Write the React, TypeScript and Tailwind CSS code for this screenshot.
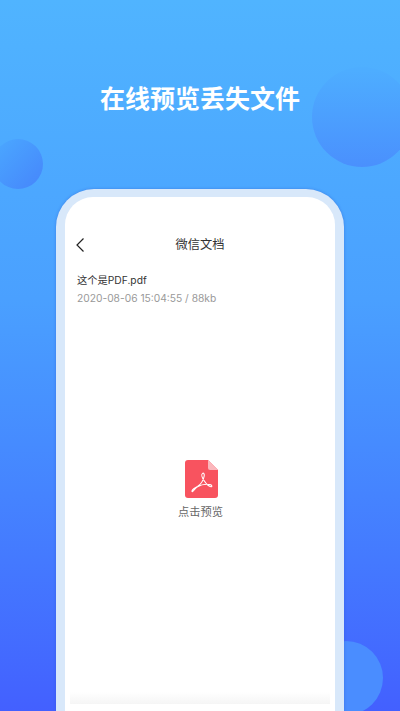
const cjk = "font-['Inter','Noto_Sans_CJK_SC',sans-serif]";

function PdfIcon() {
  return (
    <svg className="ml-[2px]" width="33" height="38" viewBox="0 0 33 38" fill="none">
      <path d="M3 0H23L33 10V35a3 3 0 0 1-3 3H3a3 3 0 0 1-3-3V3a3 3 0 0 1 3-3Z" fill="#f8535f" />
      <path d="M23 0L33 10H25a2 2 0 0 1-2-2Z" fill="#fbb6bb" />
      <path
        d="M7 31.5C6.5 29.5 10 28 12.5 26.5C15.5 24.5 18.5 20 19.2 16C19.6 13.5 18.5 12.8 17.5 13.4C16 14.5 17.2 18 19 20.5C21 23.5 24 26.5 26 26.8C27.5 26.8 27 25 25 24.6C21.5 24 16 24.8 12.5 26.8C10 28.3 7.5 32.5 7 31.5Z"
        stroke="#fff"
        strokeWidth="1.1"
        strokeLinejoin="round"
      />
    </svg>
  );
}

export default function App() {
  return (
    <div className={`relative flex h-[711px] w-[400px] flex-col items-center overflow-hidden bg-gradient-to-b from-[#50b4ff] via-[#4aa0ff] via-42% to-[#4360ff] ${cjk}`}>
      <div className="absolute left-[312px] top-[67px] h-[100px] w-[100px] rounded-full bg-gradient-to-b from-[#4eaeff] to-[#4a90fd]" />
      <div className="absolute left-[-7px] top-[139px] h-[50px] w-[50px] rounded-full bg-gradient-to-br from-[#4ba9ff] to-[#4685fb]" />
      <div className="absolute left-[309px] top-[641px] h-[74px] w-[74px] rounded-full bg-[#4a8dff]" />

      <h1 className="relative mt-[81px] text-[25px] leading-[36px] font-bold text-white">在线预览丢失文件</h1>

      <div className="relative mt-[72px] w-[288px] flex-1 rounded-t-[38px] bg-[#d8e8fa] px-[9px] pt-[8px] shadow-[0_0_3px_rgba(40,80,200,0.45)]">
        <div className="flex h-full flex-col rounded-t-[28px] bg-white">
          <div className="relative mt-[38px] flex h-[20px] items-center justify-center">
            <svg className="absolute left-[10px] top-[2px]" width="10" height="16" viewBox="0 0 10 16" fill="none">
              <path d="M8.5 1.5L2 8L8.5 14.5" stroke="#222" strokeWidth="1.2" />
            </svg>
            <span className="text-[12.25px] text-[#333]">微信文档</span>
          </div>
          <div className="mt-[16px] pl-[12px] text-[10.25px] leading-[18px]">
            <p className="text-[#333]">这个是PDF.pdf</p>
            <p className="text-[#999]">2020-08-06 15:04:55 / 88kb</p>
          </div>
          <div className="mt-[153px] flex flex-col items-center">
            <PdfIcon />
            <span className="mt-[6px] pl-[1px] text-[11.25px] leading-[16px] text-[#666]">点击预览</span>
          </div>
          <div className="mx-[5px] mt-auto mb-[7px] h-[12px] bg-gradient-to-b from-white to-[#f5f5f5]" />
        </div>
      </div>
    </div>
  );
}
